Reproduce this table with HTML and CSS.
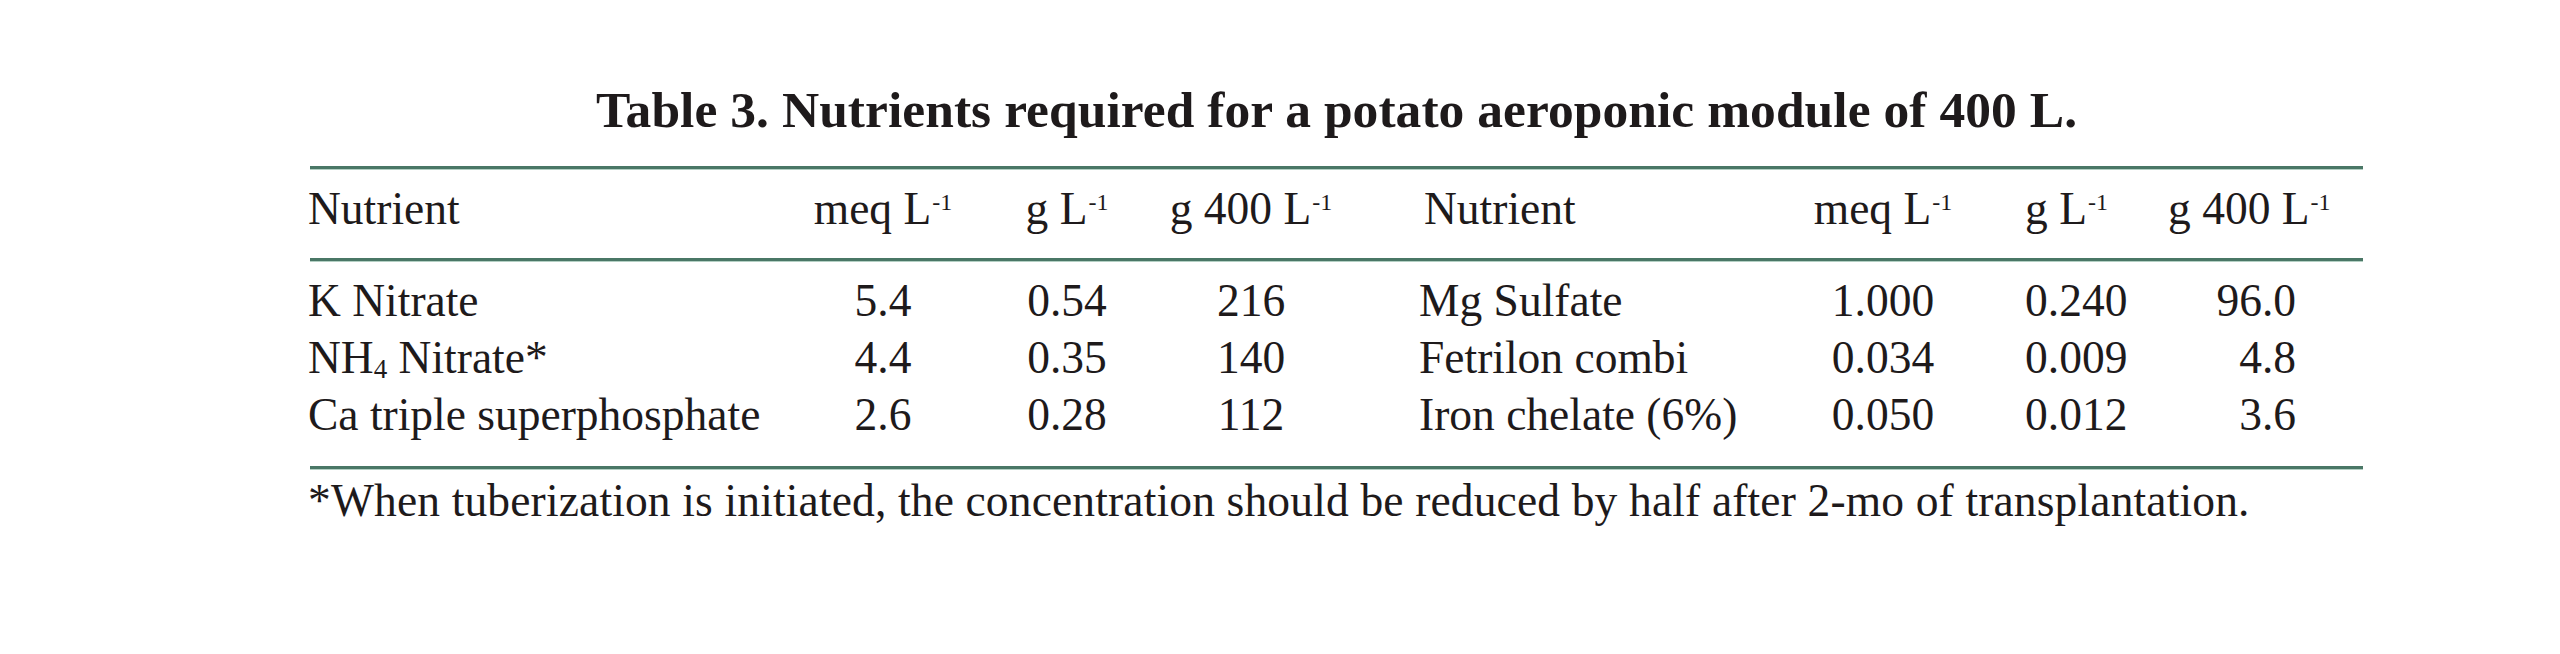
FILE: index.html
```html
<!DOCTYPE html>
<html lang="en">
<head>
<meta charset="utf-8">
<title>Table 3. Nutrients required for a potato aeroponic module of 400 L.</title>
<link rel="stylesheet" href="styles.css">
</head>
<body>
<div class="page">
  <h1 class="title">Table 3. Nutrients required for a potato aeroponic module of 400 L.</h1>
  <div class="rule"></div>
  <div class="row head">
    <div class="cell c1">Nutrient</div>
    <div class="cell cc">meq L<sup>-1</sup></div>
    <div class="cell cc">g L<sup>-1</sup></div>
    <div class="cell cc">g 400 L<sup>-1</sup></div>
    <div class="cell c5h">Nutrient</div>
    <div class="cell cc">meq L<sup>-1</sup></div>
    <div class="cell c7">g L<sup>-1</sup></div>
    <div class="cell c8h">g 400 L<sup>-1</sup></div>
  </div>
  <div class="rule"></div>
  <div class="body">
    <div class="row">
      <div class="cell c1">K Nitrate</div>
      <div class="cell cc">5.4</div>
      <div class="cell cc">0.54</div>
      <div class="cell cc">216</div>
      <div class="cell c5">Mg Sulfate</div>
      <div class="cell cc">1.000</div>
      <div class="cell c7">0.240</div>
      <div class="cell c8">96.0</div>
    </div>
    <div class="row">
      <div class="cell c1">NH<sub>4</sub> Nitrate*</div>
      <div class="cell cc">4.4</div>
      <div class="cell cc">0.35</div>
      <div class="cell cc">140</div>
      <div class="cell c5">Fetrilon combi</div>
      <div class="cell cc">0.034</div>
      <div class="cell c7">0.009</div>
      <div class="cell c8">4.8</div>
    </div>
    <div class="row">
      <div class="cell c1">Ca triple superphosphate</div>
      <div class="cell cc">2.6</div>
      <div class="cell cc">0.28</div>
      <div class="cell cc">112</div>
      <div class="cell c5">Iron chelate (6%)</div>
      <div class="cell cc">0.050</div>
      <div class="cell c7">0.012</div>
      <div class="cell c8">3.6</div>
    </div>
  </div>
  <div class="rule"></div>
  <p class="note">*When tuberization is initiated, the concentration should be reduced by half after 2-mo of transplantation.</p>
</div>
</body>
</html>
```

FILE: styles.css
```css
html, body {
  margin: 0;
  padding: 0;
  background: #ffffff;
}

body {
  font-family: "Liberation Serif", "Times New Roman", serif;
  color: #1e1a1b;
}

.page {
  width: 2053px;
  margin-left: 310px;
  padding-top: 80px;
}

.title {
  margin: 0 0 26px 0;
  font-size: 51.5px;
  line-height: 60px;
  font-weight: bold;
  letter-spacing: 0.05px;
  text-align: center;
  white-space: nowrap;
}

.rule {
  height: 3px;
  background: #4a7766;
  box-shadow: 0 1px 0 #b4d0c4;
}

.row {
  display: grid;
  grid-template-columns: 480px 186px 182px 186px 456px 166px 184px 213px;
  font-size: 45.5px;
  line-height: 57px;
  white-space: nowrap;
}

.head {
  padding: 11px 0 21px 0;
}

.body {
  padding: 11px 0 23px 0;
}

.cell {
  white-space: nowrap;
}

.c1 {
  text-align: left;
  margin-left: -2px;
}

.cc {
  text-align: center;
}

.c5h {
  padding-left: 80px;
}

.c5 {
  padding-left: 75px;
}

.c7 {
  padding-left: 59px;
}

.c8h {
  padding-left: 18px;
}

.c8 {
  text-align: right;
  padding-right: 67px;
}

sup {
  font-size: 24px;
  line-height: 0;
  vertical-align: 14px;
  margin-left: 1px;
}

sub {
  font-size: 27px;
  line-height: 0;
  vertical-align: -5px;
}

.note {
  margin: 0 0 0 -2px;
  padding-top: 3px;
  font-size: 45.5px;
  line-height: 57px;
  letter-spacing: 0.15px;
  white-space: nowrap;
}
```
